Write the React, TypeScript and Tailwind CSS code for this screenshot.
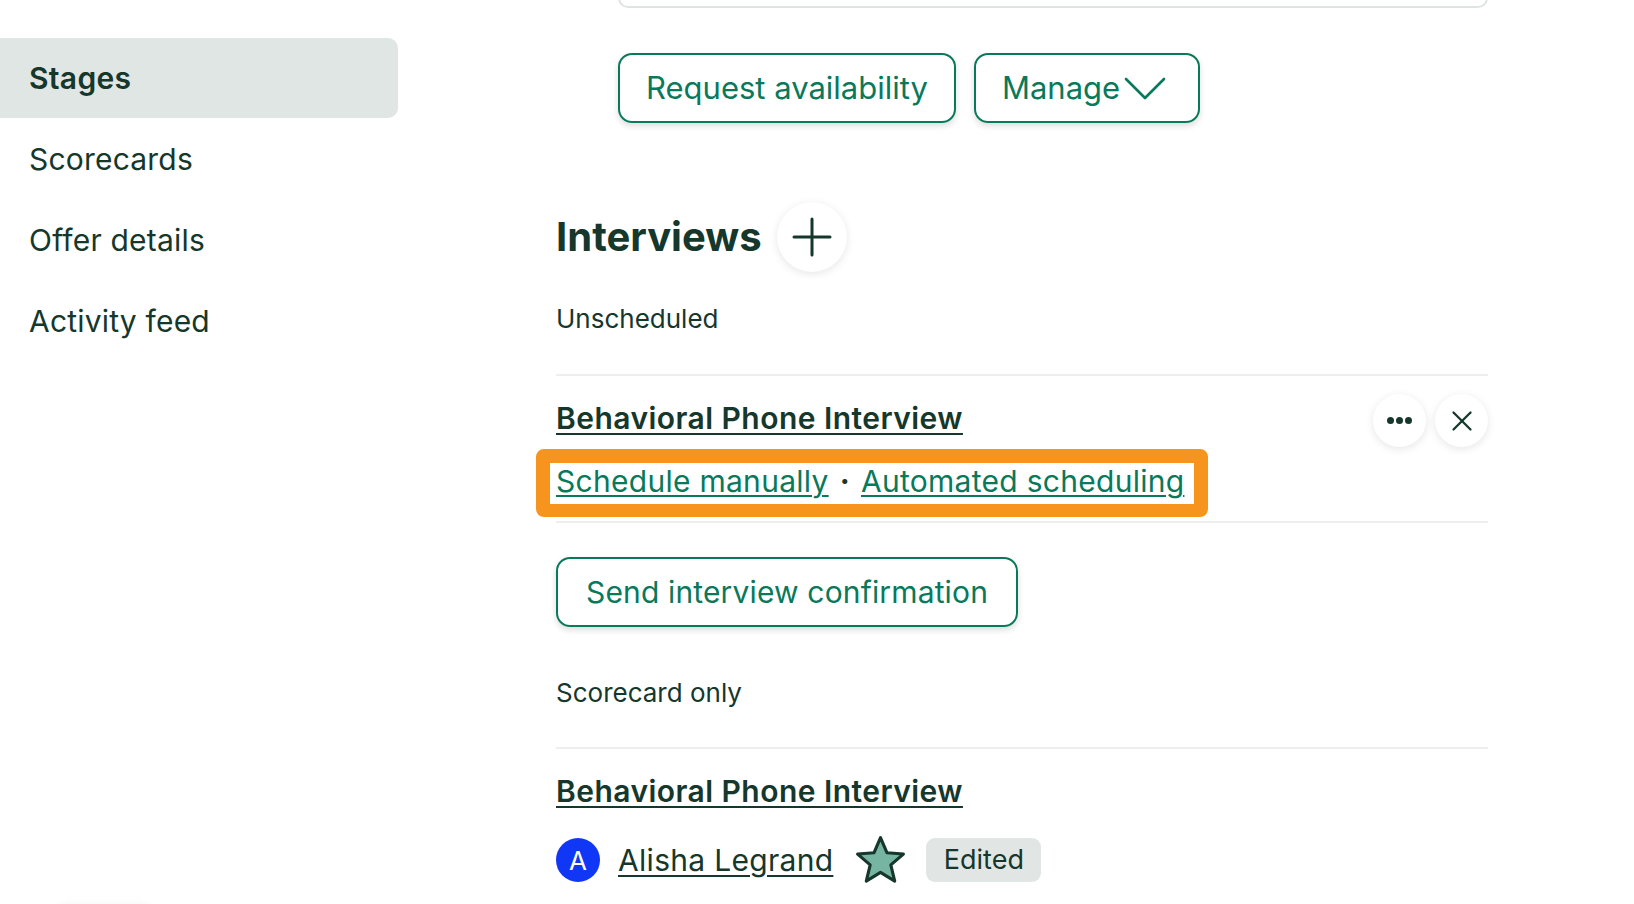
import { X } from 'lucide-react';

const navItems = ['Stages', 'Scorecards', 'Offer details', 'Activity feed'];

function Star() {
  return (
    <svg width="55" height="53" viewBox="0 0 48 46" className="shrink-0">
      <path
        d="M24 3 L29.6 16.2 L44 17.4 L33 26.8 L36.4 41 L24 33.4 L11.6 41 L15 26.8 L4 17.4 L18.4 16.2 Z"
        fill="#76b5a1"
        stroke="#15372c"
        strokeWidth="2.7"
        strokeLinejoin="round"
      />
    </svg>
  );
}

function Chevron() {
  return (
    <svg width="42" height="24" viewBox="0 0 42 24" className="ml-[4px] mt-[2px]">
      <path d="M2 2 L21 21 L40 2" fill="none" stroke="currentColor" strokeWidth="2.6" strokeLinecap="round" strokeLinejoin="round" />
    </svg>
  );
}

function PlusIcon() {
  return (
    <svg width="40" height="40" viewBox="0 0 40 40">
      <path d="M20 2 V38 M2 20 H38" stroke="currentColor" strokeWidth="3" strokeLinecap="round" />
    </svg>
  );
}

function IconCircle({ children, size }: { children: React.ReactNode; size: string }) {
  return (
    <button className={`${size} flex items-center justify-center rounded-full bg-white text-[#15372c] shadow-[0_2px_8px_rgba(0,0,0,0.10)]`}>
      {children}
    </button>
  );
}

export default function App() {
  return (
    <div className="relative min-h-screen overflow-hidden bg-white font-['Inter','Noto_Sans',sans-serif] text-[#15372c]">
      <div className="flex items-start">
        {/* sidebar */}
        <nav className="flex w-[398px] shrink-0 flex-col gap-[1px] pt-[38px]">
          {navItems.map((item, i) => (
            <a
              key={item}
              href="#"
              className={
                i === 0
                  ? 'flex h-[80px] items-center rounded-r-[10px] bg-[#e0e6e3] pl-[29px] text-[30px] font-semibold tracking-[0.3px]'
                  : 'flex h-[80px] items-center pl-[29px] text-[30px] tracking-[0.2px]'
              }
            >
              {item}
            </a>
          ))}
        </nav>

        {/* main */}
        <main className="ml-[158px] w-[932px]">
          <div className="-mt-[52px] ml-[62px] h-[60px] rounded-[10px] border-2 border-[#dfe4e2]" />

          <div className="ml-[62px] mt-[45px] flex gap-[18px]">
            <button className="flex h-[70px] items-center rounded-[14px] border-2 border-[#08795a] px-[26px] text-[31px] text-[#08795a] shadow-[0_3px_6px_rgba(0,0,0,0.14)]">
              Request availability
            </button>
            <button className="flex h-[70px] items-center rounded-[14px] border-2 border-[#08795a] pl-[26px] pr-[32px] text-[31px] text-[#08795a] shadow-[0_3px_6px_rgba(0,0,0,0.14)]">
              Manage
              <Chevron />
            </button>
          </div>

          <div className="mt-[79px] flex h-[70px] items-center gap-[15px]">
            <h2 className="text-[40px] font-bold leading-none">Interviews</h2>
            <IconCircle size="h-[70px] w-[70px]">
              <PlusIcon />
            </IconCircle>
          </div>

          <p className="mt-[29px] h-[36px] text-[26px] leading-[36px]">Unscheduled</p>
          <div className="mt-[37px] h-[2px] bg-[#eeeeee]" />

          <div className="mt-[18px] flex h-[53px] items-center justify-between">
            <a href="#" className="pb-[5px] text-[30px] font-semibold leading-[40px] tracking-[0.45px] underline decoration-2 underline-offset-[4px]">
              Behavioral Phone Interview
            </a>
            <div className="flex gap-[9px]">
              <IconCircle size="h-[53px] w-[53px]">
                <span className="flex gap-[2px]">
                  <span className="h-[7px] w-[7px] rounded-full bg-[#15372c]" />
                  <span className="h-[7px] w-[7px] rounded-full bg-[#15372c]" />
                  <span className="h-[7px] w-[7px] rounded-full bg-[#15372c]" />
                </span>
              </IconCircle>
              <IconCircle size="h-[53px] w-[53px]">
                <X size={34} strokeWidth={1.6} />
              </IconCircle>
            </div>
          </div>

          {/* highlighted scheduling links */}
          <div className="-ml-[20px] mt-[2px] flex h-[68px] w-fit items-center rounded-[8px] border-[14px] border-b-[13px] border-[#f7941d] bg-white pb-[4px] pl-[6px] pr-[10px] text-[30px] tracking-[0.28px] text-[#08795a]">
            <a href="#" className="underline decoration-2 underline-offset-[3px]">Schedule manually</a>
            <span className="mx-[11px] font-bold text-[#15372c]">·</span>
            <a href="#" className="underline decoration-2 underline-offset-[3px]">Automated scheduling</a>
          </div>
          <div className="mt-[4px] h-[2px] bg-[#eeeeee]" />

          <button className="mt-[34px] flex h-[70px] items-center rounded-[14px] border-2 border-[#08795a] px-[28px] text-[30px] tracking-[0.15px] text-[#08795a] shadow-[0_3px_6px_rgba(0,0,0,0.14)]">
            Send interview confirmation
          </button>

          <p className="mt-[48px] h-[36px] text-[26px] leading-[36px]">Scorecard only</p>
          <div className="mt-[36px] h-[2px] bg-[#eeeeee]" />

          <a href="#" className="mt-[22px] block h-[40px] w-fit text-[30px] font-semibold leading-[40px] tracking-[0.45px] underline decoration-2 underline-offset-[4px]">
            Behavioral Phone Interview
          </a>

          <div className="mt-[27px] flex h-[44px] items-center">
            <span className="flex h-[44px] w-[44px] items-center justify-center rounded-full bg-[#0f37f5] text-[26px] text-white">
              A
            </span>
            <a href="#" className="ml-[18px] text-[30px] tracking-[0.3px] underline decoration-2 underline-offset-[4px]">
              Alisha Legrand
            </a>
            <span className="ml-[20px]">
              <Star />
            </span>
            <span className="ml-[18px] flex h-[44px] w-[115px] items-center justify-center rounded-[9px] bg-[#e1e6e4] text-[27px]">
              Edited
            </span>
          </div>
        </main>
      </div>

      {/* floating help button just below the fold */}
      <div className="fixed left-[45px] top-[907px] h-[50px] w-[118px] rounded-full bg-white shadow-[0_-2px_10px_rgba(0,0,0,0.06)]" />
    </div>
  );
}
